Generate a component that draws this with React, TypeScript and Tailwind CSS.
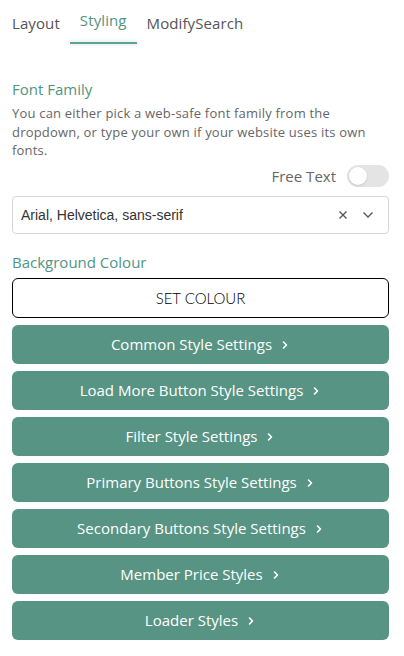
import { useState } from 'react';

const sections = [
  'Common Style Settings',
  'Load More Button Style Settings',
  'Filter Style Settings',
  'Primary Buttons Style Settings',
  'Secondary Buttons Style Settings',
  'Member Price Styles',
  'Loader Styles',
];

function Chevron({ className }: { className?: string }) {
  return (
    <svg viewBox="0 0 10 10" className={className} fill="none" stroke="currentColor" strokeWidth="1.6" strokeLinecap="round" strokeLinejoin="round">
      <path d="M3.5 2 L6.5 5 L3.5 8" />
    </svg>
  );
}

export default function App() {
  const [freeText, setFreeText] = useState(false);
  const tabs = ['Layout', 'Styling', 'ModifySearch'];
  const active = 'Styling';

  return (
    <div className="min-h-[656px] w-[404px] bg-white pl-3 pr-[15px] font-['Open_Sans',sans-serif] text-[#555]">
      <div className="flex h-[46px] items-center gap-[10px] pt-[1px]">
        {tabs.map((tab) => (
          <div key={tab} className="relative h-full">
            <button
              type="button"
              className={`flex h-[45px] items-center text-[15px] tracking-[0.1px] ${tab === active ? '-mt-[3px] px-[10px] text-[#4f9583]' : 'text-[#555]'}`}
            >
              {tab}
            </button>
            {tab === active ? <div className="absolute bottom-[2px] left-0 right-0 h-[2px] bg-[#5fa492] shadow-[0_0_4px_rgba(95,164,146,0.4)]" /> : null}
          </div>
        ))}
      </div>

      <h3 className="mt-[33px] text-[15px] leading-5 text-[#4f9583]">Font Family</h3>
      <p className="mt-[5px] text-[13px] leading-[18.5px] tracking-[0.2px] text-[#666]">
        You can either pick a web-safe font family from the dropdown, or type your own if your website uses its own fonts.
      </p>

      <div className="mt-[5px] flex items-center justify-end gap-[11px]">
        <span className="text-[15px] text-[#666]">Free Text</span>
        <button
          type="button"
          onClick={() => setFreeText(!freeText)}
          className="relative h-[22px] w-[42px] rounded-full bg-[#e4e4e4]"
        >
          <span className="absolute left-[2px] top-[2px] h-[18px] w-[18px] rounded-full bg-white shadow-sm" />
        </button>
      </div>

      <div className="mt-[9px] flex h-[38px] items-center rounded border border-[#d6d6d6] pl-2 pr-[14px]">
        <span className="flex-1 font-['Liberation_Sans',sans-serif] text-[14px] text-[#333]">Arial, Helvetica, sans-serif</span>
        <span className="mr-[14px] text-[#555]">
          <svg viewBox="0 0 10 10" className="h-[10px] w-[10px]" stroke="currentColor" strokeWidth="1.3">
            <path d="M1.5 1.5 L8.5 8.5 M8.5 1.5 L1.5 8.5" />
          </svg>
        </span>
        <svg viewBox="0 0 12 8" className="h-[8px] w-[12px] text-[#555]" fill="none" stroke="currentColor" strokeWidth="1.3">
          <path d="M1.5 1.5 L6 6 L10.5 1.5" />
        </svg>
      </div>

      <h3 className="mt-[18px] text-[15px] leading-5 text-[#4f9583]">Background Colour</h3>
      <button
        type="button"
        className="mt-[6px] flex h-[40px] w-full items-center justify-center rounded-md border border-black font-['Lato',sans-serif] text-[15px] font-light text-black"
      >
        SET COLOUR
      </button>

      <div className="mt-[7px] flex flex-col gap-[7px]">
        {sections.map((label) => (
          <button
            key={label}
            type="button"
            className="flex h-[39px] w-full items-center justify-center gap-[8px] rounded-md bg-[#579483] text-[15px] text-white"
          >
            {label}
            <Chevron className="h-[10px] w-[10px]" />
          </button>
        ))}
      </div>
    </div>
  );
}
